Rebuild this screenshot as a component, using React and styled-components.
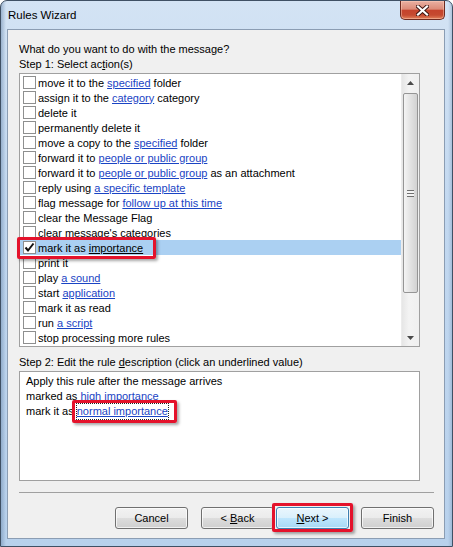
import styled, { createGlobalStyle } from "styled-components";

const GlobalStyle = createGlobalStyle`
  html, body {
    margin: 0;
    padding: 0;
    background: #ffffff;
  }
  body {
    font-family: "Liberation Sans", Arial, sans-serif;
    font-size: 11px;
    color: #000;
  }
`;

const actions = [
  ["move it to the ", { link: "specified" }, " folder"],
  ["assign it to the ", { link: "category" }, " category"],
  ["delete it"],
  ["permanently delete it"],
  ["move a copy to the ", { link: "specified" }, " folder"],
  ["forward it to ", { link: "people or public group" }],
  ["forward it to ", { link: "people or public group" }, " as an attachment"],
  ["reply using ", { link: "a specific template" }],
  ["flag message for ", { link: "follow up at this time" }],
  ["clear the Message Flag"],
  ["clear message's categories"],
  ["mark it as ", { link: "importance", plain: true }],
  ["print it"],
  ["play ", { link: "a sound" }],
  ["start ", { link: "application" }],
  ["mark it as read"],
  ["run ", { link: "a script" }],
  ["stop processing more rules"],
];

const SELECTED = 11;

const renderParts = (parts) => (
  <Text>
    {parts.map((p, i) =>
      typeof p === "string" ? (
        p
      ) : (
        <Link key={i} $plain={p.plain}>
          {p.link}
        </Link>
      )
    )}
  </Text>
);

const Check = () => (
  <svg width="11" height="11" viewBox="0 0 11 11">
    <path
      d="M1.5 5.5 L4 8.5 L9.5 1.5"
      fill="none"
      stroke="#111"
      strokeWidth="2"
    />
  </svg>
);

const Arrow = ({ up }) => (
  <svg width="7" height="4" viewBox="0 0 7 4">
    <path d={up ? "M0 4 L3.5 0 L7 4 Z" : "M0 0 L3.5 4 L7 0 Z"} fill="#4a4a4a" />
  </svg>
);

const CloseGlyph = () => (
  <svg width="13" height="11" viewBox="0 0 13 11">
    <path
      d="M2 1.5 L11 9.5 M11 1.5 L2 9.5"
      stroke="#3b1410"
      strokeWidth="4"
      strokeLinecap="square"
    />
    <path
      d="M2 1.5 L11 9.5 M11 1.5 L2 9.5"
      stroke="#ffffff"
      strokeWidth="2.2"
      strokeLinecap="square"
    />
  </svg>
);

const App = () => {
  return (
    <>
      <GlobalStyle />
      <Window>
        <TitleBar>
          <Title>Rules Wizard</Title>
          <CloseBtn>
            <CloseGlyph />
          </CloseBtn>
        </TitleBar>

        <Client>
          <Label $top={1}>What do you want to do with the message?</Label>
          <Label>
            Step 1: Select ac<u>t</u>ion(s)
          </Label>

          <ListBox>
            <Rows>
              {actions.map((parts, i) => (
                <Row key={i} $selected={i === SELECTED}>
                  {i === SELECTED ? (
                    <Callout $inset="-4px -13px -5px -6px">
                      <CheckBox>
                        <Check />
                      </CheckBox>
                      {renderParts(parts)}
                    </Callout>
                  ) : (
                    <>
                      <CheckBox />
                      {renderParts(parts)}
                    </>
                  )}
                </Row>
              ))}
            </Rows>
            <ScrollBar>
              <ArrowBtn>
                <Arrow up />
              </ArrowBtn>
              <Track>
                <Thumb>
                  <Grip />
                </Thumb>
              </Track>
              <ArrowBtn>
                <Arrow />
              </ArrowBtn>
            </ScrollBar>
          </ListBox>

          <Label $top={8}>
            Step 2: Edit the rule <u>d</u>escription (click an underlined value)
          </Label>

          <DescBox>
            <DescLine>Apply this rule after the message arrives</DescLine>
            <DescLine>
              marked as <Link>high importance</Link>
            </DescLine>
            <DescLine>
              mark it as{" "}
              <Callout $inset="-4px -9px -4px -5px">
                <Link $focus>normal importance</Link>
              </Callout>
            </DescLine>
          </DescBox>

          <Separator />

          <Buttons>
            <Button $gap={13}>
              <Text>Cancel</Text>
            </Button>
            <Button $gap={2}>
              <Text>
                &lt; <u>B</u>ack
              </Text>
            </Button>
            <Callout $inset="-4px -4px -3px -4px">
              <Button $primary>
                <Text>
                  <u>N</u>ext &gt;
                </Text>
              </Button>
            </Callout>
            <Button $lead={12}>
              <Text>Finish</Text>
            </Button>
          </Buttons>
        </Client>
      </Window>
    </>
  );
};

const Window = styled.div`
  width: 453px;
  height: 547px;
  box-sizing: border-box;
  display: flex;
  flex-direction: column;
  border: 1px solid #3f5064;
  border-radius: 7px 7px 0 0;
  background:
    linear-gradient(90deg, rgba(110, 140, 175, 0.55) 0, rgba(190, 212, 238, 0) 5px),
    linear-gradient(270deg, rgba(110, 140, 175, 0.35) 0, rgba(190, 212, 238, 0) 4px),
    linear-gradient(180deg, #d3e3f4 0%, #c2d8f0 40%, #b8d1ec 100%);
`;

const TitleBar = styled.div`
  height: 28px;
  display: flex;
  justify-content: space-between;
  align-items: flex-start;
  padding: 0 7px 0 7px;
`;

const Title = styled.div`
  font-size: 11.5px;
  line-height: 28px;
  color: #000;
`;

const CloseBtn = styled.div`
  width: 45px;
  height: 19px;
  box-sizing: border-box;
  display: flex;
  align-items: center;
  justify-content: center;
  border: 1px solid #6d2a20;
  border-top: none;
  border-radius: 0 0 5px 5px;
  background: linear-gradient(
    180deg,
    #eab0a2 0%,
    #dc8b78 45%,
    #c5432c 52%,
    #c54a30 78%,
    #e2805a 100%
  );
  box-shadow: inset 0 0 0 1px rgba(255, 210, 190, 0.45);
`;

const Client = styled.div`
  flex: 1;
  margin: 0 7px 7px 6px;
  border: 1px solid #8b9db3;
  background: #f0f0f0;
  padding: 11px 10px 0 11px;
  display: flex;
  flex-direction: column;
`;

const Label = styled.div`
  line-height: 15px;
  height: 15px;
  white-space: nowrap;
  margin-top: ${(p) => p.$top || 0}px;
`;

const Text = styled.span`
  white-space: pre;
`;

const ListBox = styled.div`
  width: 401px;
  height: 274px;
  box-sizing: border-box;
  margin-top: 1px;
  border: 1px solid #a0a0a0;
  background: #fff;
  display: flex;
`;

const Rows = styled.div`
  flex: 1;
  padding-top: 1px;
`;

const Row = styled.div`
  height: 15px;
  display: flex;
  align-items: center;
  padding-left: 3px;
  white-space: nowrap;
  background: ${(p) => (p.$selected ? "#abd0f2" : "transparent")};
`;

const CheckBox = styled.span`
  width: 13px;
  height: 13px;
  box-sizing: border-box;
  border: 1px solid #8e8f8f;
  background: #fff;
  margin-right: 2px;
  display: inline-flex;
  align-items: center;
  justify-content: center;
  flex-shrink: 0;
`;

const Link = styled.span`
  color: ${(p) => (p.$plain ? "#000" : "#1a44c4")};
  text-decoration: underline;
  outline: ${(p) => (p.$focus ? "1px dotted #222" : "none")};
`;

const Callout = styled.span`
  position: relative;
  display: inline-flex;
  align-items: center;

  &::after {
    content: "";
    position: absolute;
    inset: ${(p) => p.$inset};
    border: 3px solid #e4122b;
    border-radius: 2px;
    box-shadow: 2px 2px 3px rgba(0, 0, 0, 0.35);
    pointer-events: none;
  }
`;

const ScrollBar = styled.div`
  width: 17px;
  display: flex;
  flex-direction: column;
  background: linear-gradient(90deg, #e6e6e6 0%, #f3f3f3 40%, #f0f0f0 100%);
  border-left: 1px solid #ececec;
`;

const ArrowBtn = styled.div`
  height: 17px;
  display: flex;
  align-items: center;
  justify-content: center;
`;

const Track = styled.div`
  flex: 1;
  padding-top: 2px;
`;

const Thumb = styled.div`
  height: 200px;
  box-sizing: border-box;
  margin: 0 1px 0 1px;
  border: 1px solid #959595;
  border-radius: 2px;
  background: linear-gradient(90deg, #f4f4f4 0%, #e4e4e4 45%, #d2d2d2 100%);
  display: flex;
  align-items: center;
  justify-content: center;
`;

const Grip = styled.div`
  width: 7px;
  height: 7px;
  background: repeating-linear-gradient(
    180deg,
    #6f6f6f 0,
    #6f6f6f 1px,
    #f4f4f4 1px,
    #f4f4f4 3px
  );
`;

const DescBox = styled.div`
  width: 401px;
  height: 110px;
  box-sizing: border-box;
  margin-top: 1px;
  border: 1px solid #a0a0a0;
  background: #fff;
  padding: 2px 6px;
`;

const DescLine = styled.div`
  line-height: 15px;
  height: 15px;
  white-space: nowrap;
`;

const Separator = styled.div`
  margin-top: 11px;
  height: 1px;
  background: #a0a0a0;
`;

const Buttons = styled.div`
  margin-top: 14px;
  display: flex;
  justify-content: flex-end;
  align-items: center;
`;

const Button = styled.div`
  width: 73px;
  height: 22px;
  box-sizing: border-box;
  margin-right: ${(p) => p.$gap || 0}px;
  margin-left: ${(p) => p.$lead || 0}px;
  border: 1px solid ${(p) => (p.$primary ? "#3c7fb1" : "#707070")};
  border-radius: 3px;
  display: flex;
  align-items: center;
  justify-content: center;
  color: #000;
  background: ${(p) =>
    p.$primary
      ? "linear-gradient(180deg, #eaf6fd 0%, #d9f0fc 50%, #bee6fd 51%, #a7d9f5 100%)"
      : "linear-gradient(180deg, #f2f2f2 0%, #ebebeb 50%, #dddddd 51%, #cfcfcf 100%)"};
  box-shadow: inset 0 0 0 1px rgba(255, 255, 255, 0.7);
`;

export default App;
